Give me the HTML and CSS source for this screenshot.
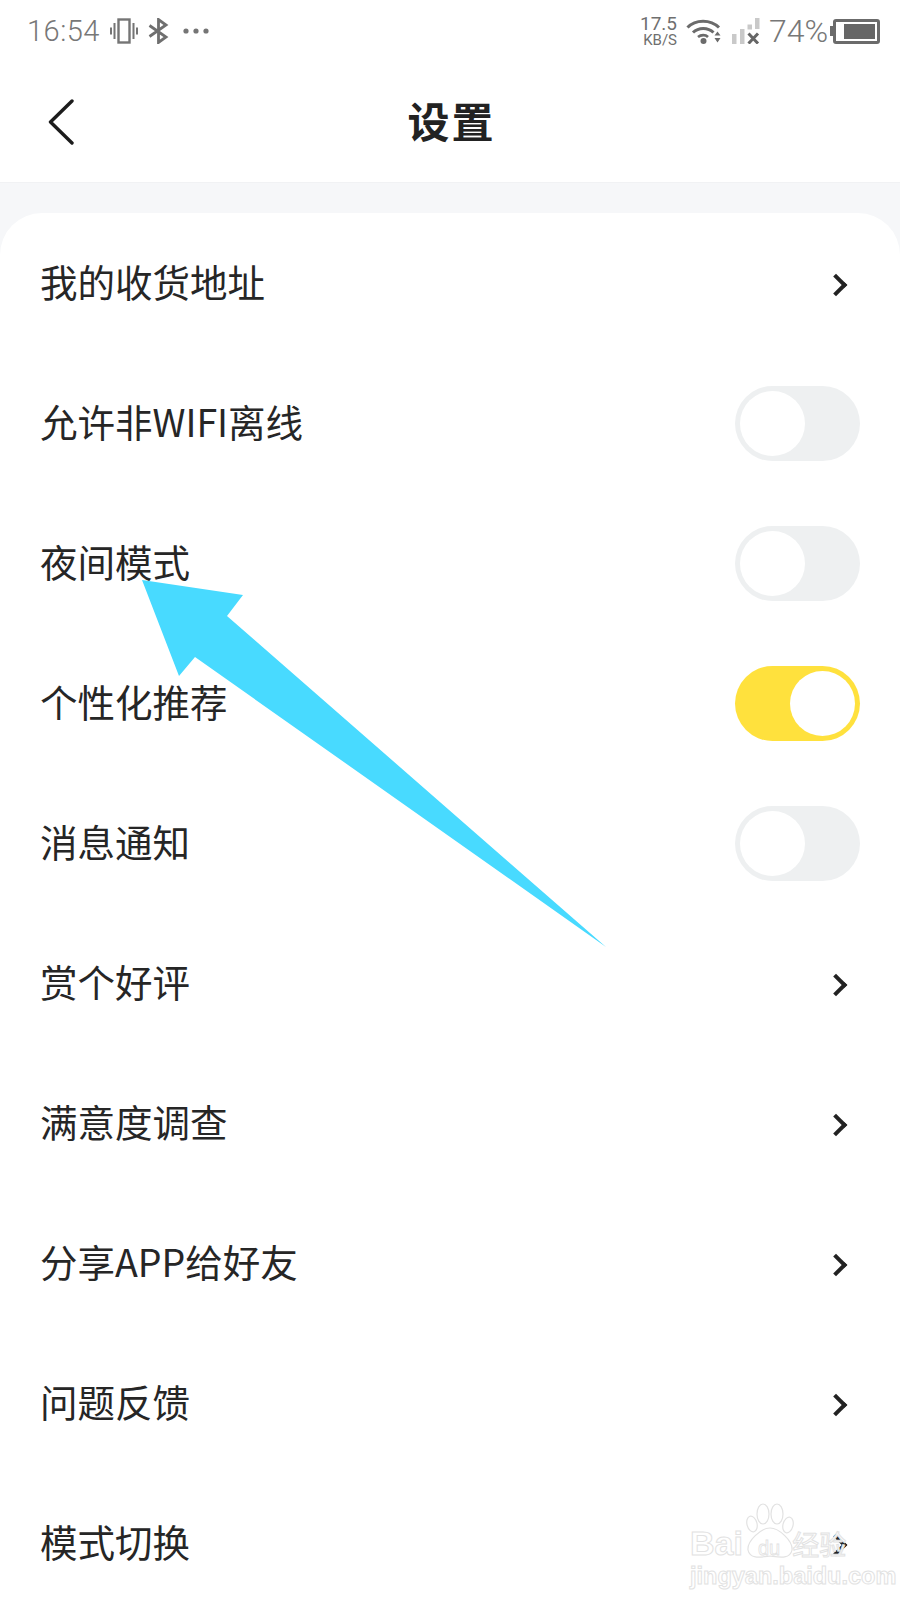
FILE: index.html
```html
<!DOCTYPE html>
<html lang="zh">
<head>
    <meta charset="UTF-8">
    <meta name="viewport" content="width=device-width, initial-scale=1.0">
    <title>设置</title>
    <link rel="stylesheet" href="styles.css">
</head>
<body>
    <div class="page">
        <div class="status-bar">
            <div class="status-left">
                <span class="time">16:54</span>
                <svg class="icon-vibrate" width="28" height="26" viewBox="0 0 28 26">
                    <rect x="8.500" y="1.500" width="11" height="23" fill="none" stroke="#757575" stroke-width="2.400"/>
                    <path d="M4.500 5v16M1 9.500v7M23.500 5v16M27 9.500v7" fill="none" stroke="#757575" stroke-width="2"/>
                </svg>
                <svg class="icon-bt" width="22" height="26" viewBox="0 0 22 26">
                    <path d="M1.500 7.500 L18 19 L10.500 24.500 V1.500 L18 7 L1.500 18.500" fill="none" stroke="#6f6f6f" stroke-width="2.800"/>
                </svg>
                <svg class="icon-dots" width="26" height="6" viewBox="0 0 26 6">
                    <circle cx="3" cy="3" r="2.600" fill="#757575"/>
                    <circle cx="13" cy="3" r="2.600" fill="#757575"/>
                    <circle cx="23" cy="3" r="2.600" fill="#757575"/>
                </svg>
            </div>
            <div class="status-right">
                <div class="speed">
                    <span class="speed-num">17.5</span>
                    <span class="speed-unit">KB/S</span>
                </div>
                <svg class="icon-wifi" width="36" height="26" viewBox="0 0 36 26">
                    <path d="M1.500 9.500 C9.500 1 24.500 1 33 9.500" fill="none" stroke="#6b6b6b" stroke-width="3"/>
                    <path d="M7 14.500 C12.500 9 22 9 27.500 14.500" fill="none" stroke="#6b6b6b" stroke-width="3"/>
                    <path d="M12 19 C15 16.500 19.500 16.500 22 19" fill="none" stroke="#6b6b6b" stroke-width="2.600"/>
                    <circle cx="17.500" cy="23" r="3" fill="#6b6b6b"/>
                    <path d="M28.500 17.500 L31.500 13.500 L34.500 17.500Z M28.500 20 L34.500 20 L31.500 24.500Z" fill="#6b6b6b"/>
                </svg>
                <svg class="icon-signal" width="28" height="26" viewBox="0 0 28 26">
                    <rect x="0" y="16" width="4.500" height="10" fill="#c9c9c9"/>
                    <rect x="8" y="11" width="4.500" height="15" fill="#c9c9c9"/>
                    <rect x="15.500" y="6.500" width="4.500" height="5" fill="#c9c9c9"/>
                    <rect x="23" y="0" width="4.500" height="11" fill="#c9c9c9"/>
                    <path d="M16.500 15.500 L26 25.500 M26 15.500 L16.500 25.500" stroke="#666" stroke-width="3"/>
                </svg>
                <span class="battery-pct">74%</span>
                <div class="battery">
                    <div class="battery-cap"></div>
                    <div class="battery-body">
                        <div class="battery-fill"></div>
                    </div>
                </div>
            </div>
        </div>

        <div class="nav-bar">
            <svg class="back" width="26" height="46" viewBox="0 0 26 46">
                <path d="M24 2 L2.500 23 L24 44" fill="none" stroke="#1c1c1c" stroke-width="3.400" stroke-linecap="round" stroke-linejoin="round"/>
            </svg>
            <h1>设置</h1>
        </div>

        <div class="content">
            <div class="card">
                <div class="row"><span>我的收货地址</span><i class="chevron"></i></div>
                <div class="row"><span>允许非WIFI离线</span><div class="switch"><div class="knob"></div></div></div>
                <div class="row"><span>夜间模式</span><div class="switch"><div class="knob"></div></div></div>
                <div class="row"><span>个性化推荐</span><div class="switch on"><div class="knob"></div></div></div>
                <div class="row"><span>消息通知</span><div class="switch"><div class="knob"></div></div></div>
                <div class="row"><span>赏个好评</span><i class="chevron"></i></div>
                <div class="row"><span>满意度调查</span><i class="chevron"></i></div>
                <div class="row"><span>分享APP给好友</span><i class="chevron"></i></div>
                <div class="row"><span>问题反馈</span><i class="chevron"></i></div>
                <div class="row"><span>模式切换</span><i class="chevron"></i></div>
            </div>
        </div>

        <!-- annotation arrow on top of the list -->
        <svg class="arrow" width="900" height="1600" viewBox="0 0 900 1600">
            <polygon points="142,580 243,595 227,616 606,947 195,657 179,676" fill="#48daff"/>
        </svg>

        <div class="watermark">
            <svg class="paw" width="50" height="56" viewBox="0 0 50 56">
                <g fill="#fff" stroke="#e2e2e2" stroke-width="1.200">
                    <ellipse cx="7" cy="21" rx="5" ry="8" transform="rotate(-15 7 21)"/>
                    <ellipse cx="18" cy="11" rx="6" ry="10"/>
                    <ellipse cx="32" cy="11" rx="6" ry="10"/>
                    <ellipse cx="43" cy="22" rx="5" ry="8" transform="rotate(15 43 22)"/>
                    <path d="M25 25 C34 25 48 38 47 47 C45 57 33 54 25 53 C17 54 5 57 3 47 C2 38 16 25 25 25Z"/>
                </g>
            </svg>
            <div class="wm-top">
                <span class="wm-big">Bai</span>
                <span class="wm-du">du</span>
                <span class="wm-big wm-cn">经验</span>
            </div>
            <div class="wm-url">jingyan.baidu.com</div>
        </div>
    </div>
</body>
</html>
```

FILE: styles.css
```css
* {
    margin: 0;
    padding: 0;
    box-sizing: border-box;
}

body {
    background: #fff;
    font-family: "Noto Sans CJK SC", "Noto Sans", sans-serif;
    overflow: hidden;
}

.page {
    position: relative;
    width: 900px;
    height: 1600px;
    overflow: hidden;
}

.status-bar {
    height: 62px;
    display: flex;
    justify-content: space-between;
    align-items: center;
    padding: 0 20px 0 27px;
    color: #777;
}

.status-left,
.status-right {
    display: flex;
    align-items: center;
}

.time {
    font-family: Roboto, sans-serif;
    font-weight: 300;
    font-size: 29px;
    letter-spacing: 0.5px;
    width: 83px;
}

.icon-bt {
    margin-left: 10px;
}

.icon-dots {
    margin-left: 13px;
}

.speed {
    display: flex;
    flex-direction: column;
    align-items: flex-end;
    font-family: Roboto, sans-serif;
    color: #6f6f6f;
    width: 37px;
}

.speed-num {
    font-size: 19px;
    line-height: 18px;
}

.speed-unit {
    font-size: 15px;
    line-height: 15px;
}

.icon-wifi {
    margin-left: 9px;
}

.icon-signal {
    margin-left: 10px;
}

.battery-pct {
    font-family: Roboto, sans-serif;
    font-weight: 300;
    font-size: 32px;
    color: #777;
    margin-left: 9px;
    width: 61px;
}

.battery {
    display: flex;
    align-items: center;
}

.battery-cap {
    width: 3px;
    height: 10px;
    background: #6b6b6b;
}

.battery-body {
    width: 47px;
    height: 25px;
    border: 3px solid #6b6b6b;
    border-radius: 3px;
    padding: 2px;
    display: flex;
    justify-content: flex-end;
}

.battery-fill {
    width: 31px;
    background: #666;
}

.nav-bar {
    position: relative;
    height: 121px;
    display: flex;
    align-items: center;
    justify-content: center;
    padding: 0 0 6px 3px;
    border-bottom: 1px solid #f1f2f4;
}

.back {
    position: absolute;
    left: 48px;
    top: 37px;
}

h1 {
    font-size: 42px;
    font-weight: 700;
    color: #222;
    letter-spacing: 2px;
}

.content {
    background: #f6f7f9;
    padding-top: 30px;
}

.card {
    background: #fff;
    border-radius: 42px 42px 0 0;
}

.row {
    height: 140px;
    display: flex;
    align-items: center;
    justify-content: space-between;
    padding: 0 40px;
    font-size: 37.500px;
    color: #262626;
}

.row span {
    margin-bottom: 5px;
}

.chevron {
    width: 16px;
    height: 16px;
    border-top: 4px solid #222;
    border-right: 4px solid #222;
    transform: rotate(45deg);
    margin: 3px 16px 0 0;
}

.switch {
    width: 125px;
    height: 75px;
    border-radius: 38px;
    background: #eef0f1;
    padding: 5px;
}

.knob {
    width: 65px;
    height: 65px;
    border-radius: 50%;
    background: #fff;
}

.switch.on {
    background: #ffe13d;
    display: flex;
    justify-content: flex-end;
}

.arrow {
    position: absolute;
    left: 0;
    top: 0;
}

.watermark {
    position: absolute;
    left: 690px;
    top: 1503px;
    width: 170px;
    text-align: center;
    color: #fff;
}

.paw {
    position: absolute;
    left: 55px;
    top: 0;
}

.wm-top {
    position: relative;
    display: flex;
    align-items: center;
    margin-top: 22px;
    height: 36px;
}

.wm-big {
    font-family: "Liberation Sans", sans-serif;
    font-size: 34px;
    font-weight: 700;
    color: #fff;
    -webkit-text-stroke: 1px #e2e2e2;
}

.wm-du {
    font-family: "Liberation Sans", sans-serif;
    font-size: 20px;
    color: #fff;
    -webkit-text-stroke: 0.8px #e2e2e2;
    margin: 10px 12px 0 15px;
}

.wm-cn {
    font-family: "Noto Sans CJK SC", sans-serif;
    font-size: 27px;
    font-weight: 400;
    white-space: nowrap;
}

.wm-url {
    position: relative;
    font-family: "Liberation Sans", sans-serif;
    font-size: 23.500px;
    font-weight: 700;
    color: #fff;
    -webkit-text-stroke: 1px #e2e2e2;
    white-space: nowrap;
    margin-top: 2px;
}
```
